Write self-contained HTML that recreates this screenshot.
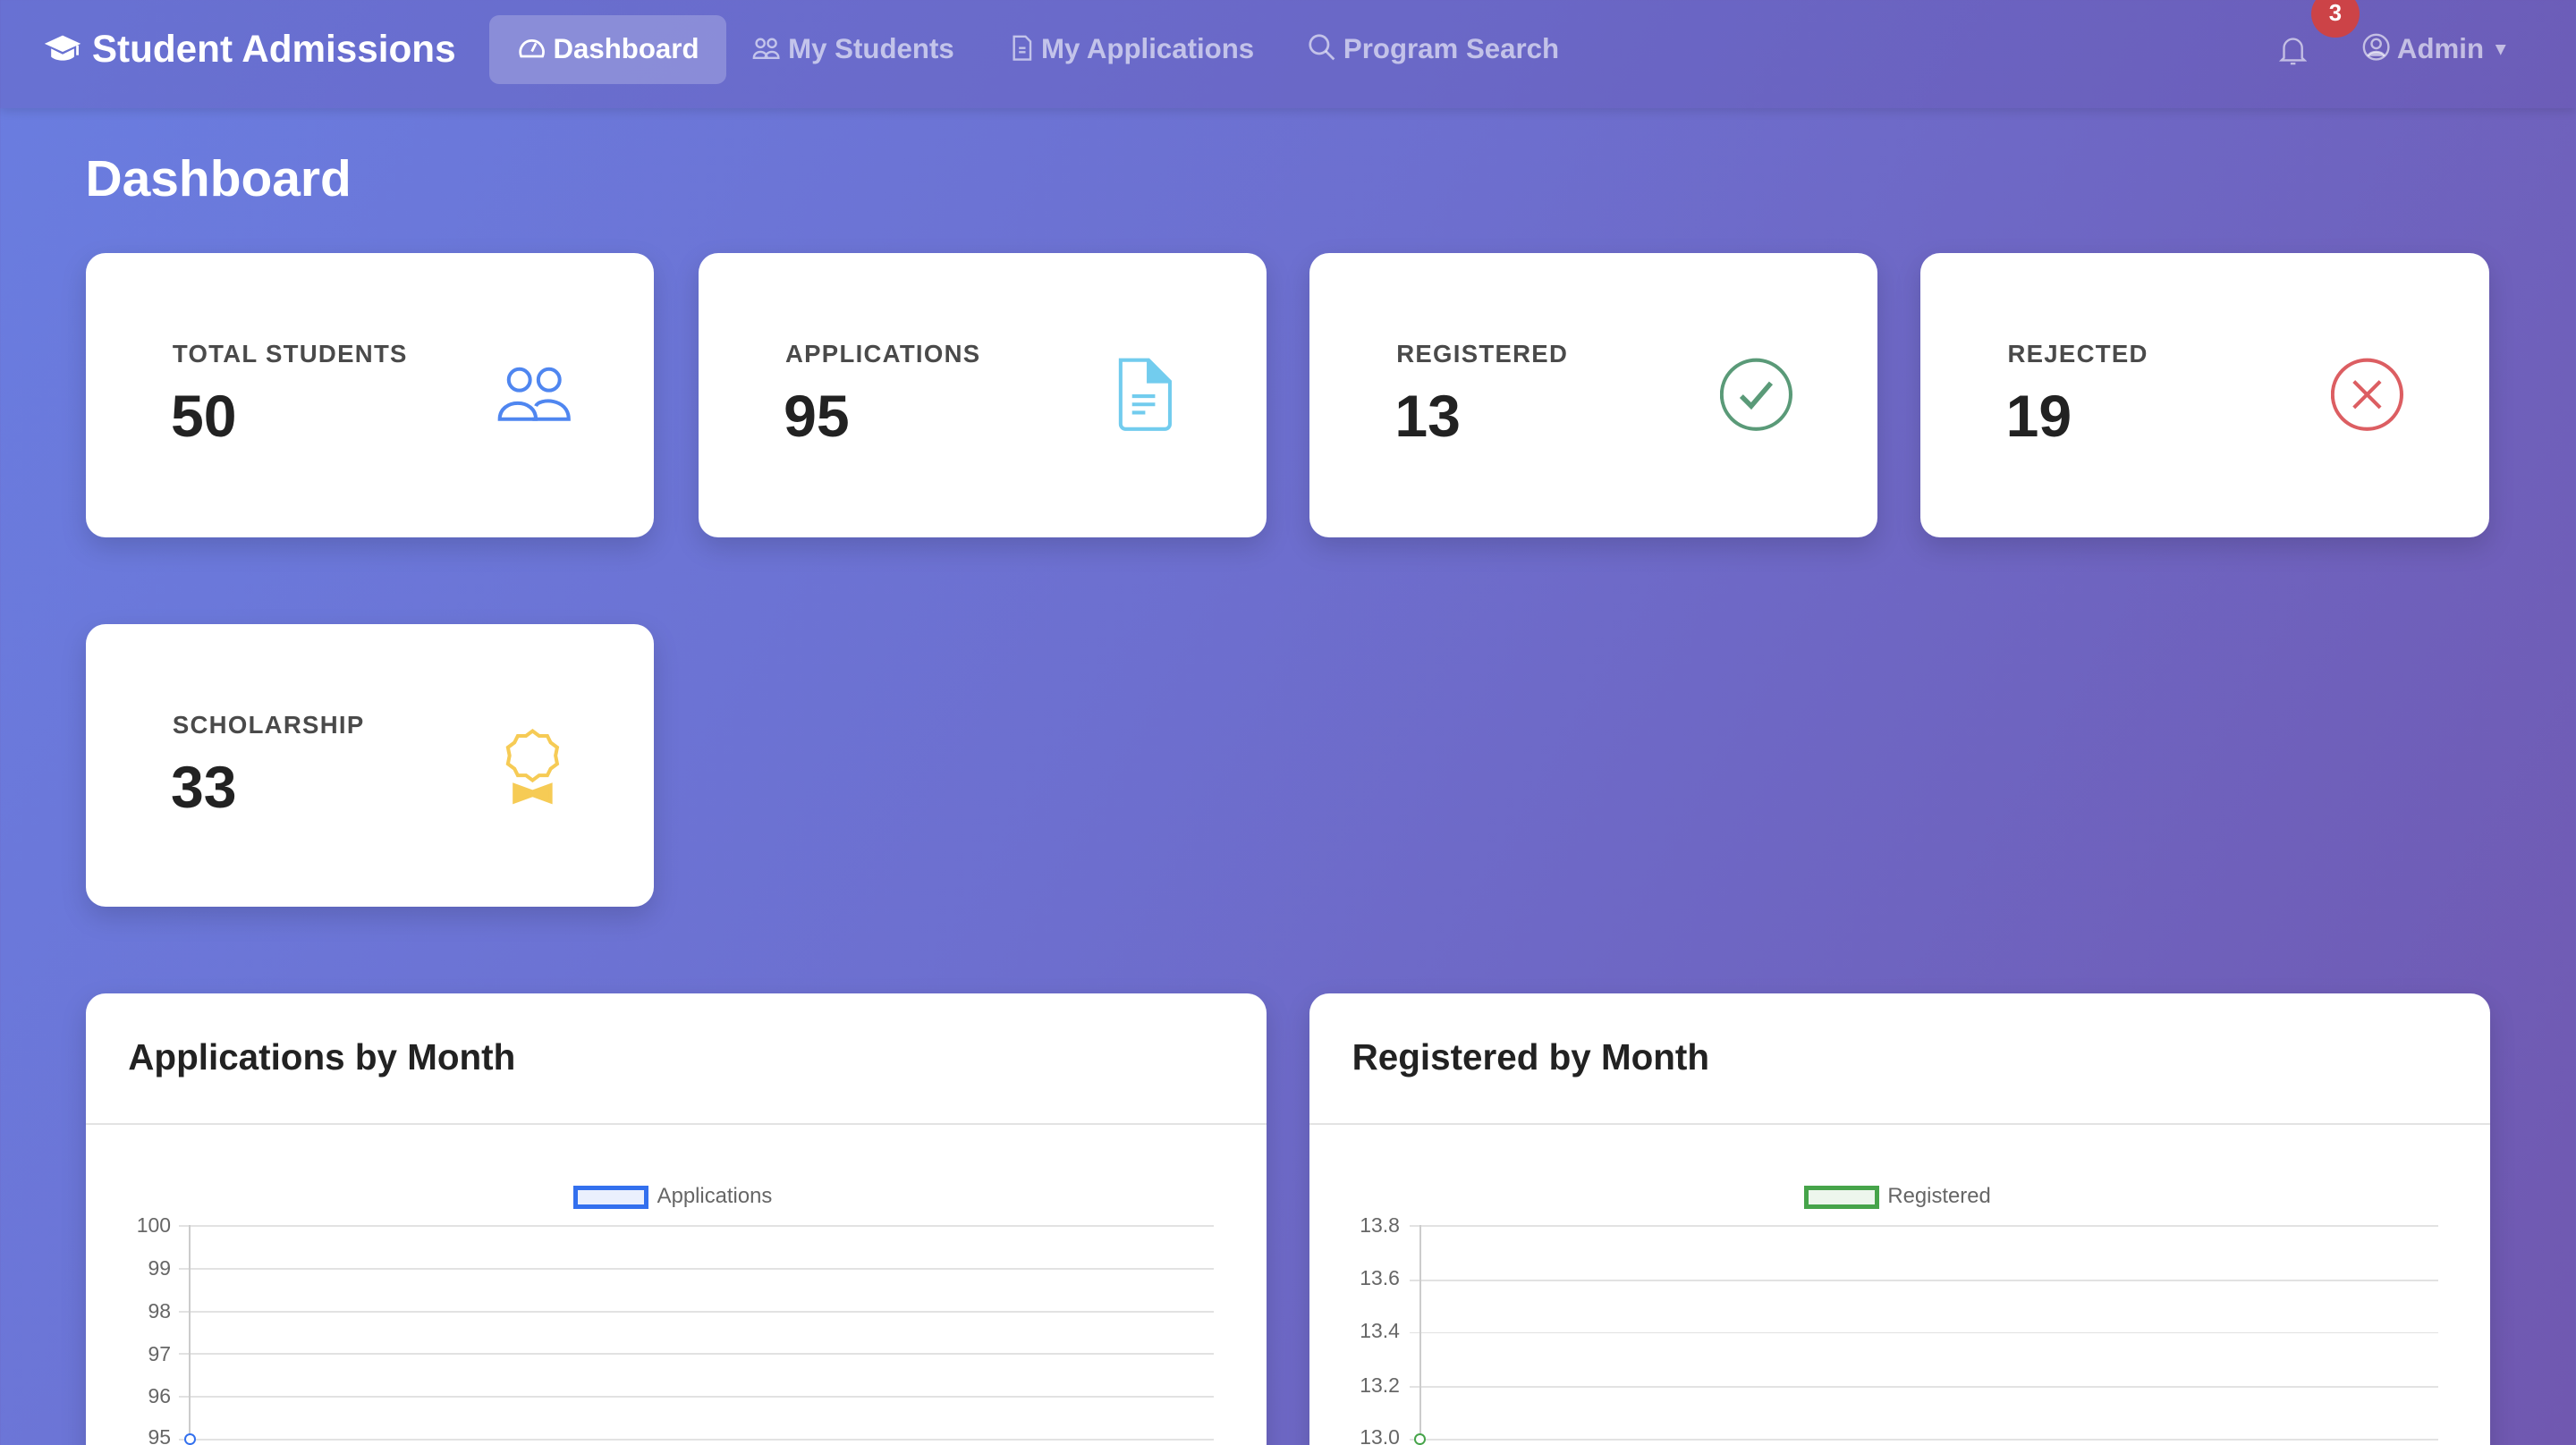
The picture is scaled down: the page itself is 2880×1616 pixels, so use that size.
<!DOCTYPE html>
<html><head><meta charset="utf-8"><style>
html{zoom:1.83673;overflow:hidden;height:880px}
*{box-sizing:border-box;margin:0;padding:0}
body{width:1568px;height:880px;overflow:hidden;font-family:"Liberation Sans",sans-serif;background:linear-gradient(120deg,#6a7de0 0%,#6d6fcf 45%,#7058b0 100%);position:relative}
.nav{position:absolute;left:0;top:0;width:1568px;height:66px;background:rgba(100,80,170,0.25);box-shadow:0 2px 6px rgba(0,0,0,0.12)}
.brand{position:absolute;left:26px;top:17px;color:#fff;font-weight:bold;font-size:23px}
.nl{position:absolute;top:20px;font-size:17px;color:rgba(255,255,255,0.6);font-weight:bold}
.act{position:absolute;left:298px;top:9px;width:144px;height:42px;background:rgba(255,255,255,0.22);border-radius:6px}
h1{position:absolute;left:52px;top:91px;color:#fff;font-size:31px;font-weight:bold}
.card{position:absolute;background:#fff;border-radius:12px;box-shadow:0 6px 16px rgba(0,0,0,0.15)}
.lbl{position:absolute;left:53px;top:53px;font-size:15px;letter-spacing:0.7px;color:#4a4a4a;font-weight:bold}
.num{position:absolute;left:52px;top:79px;font-size:36px;font-weight:bold;color:#222}
.ic{position:absolute;left:250px;top:63px}
.ct{position:absolute;left:26px;top:26px;font-size:22px;font-weight:bold;color:#222}
.hr{position:absolute;left:0;right:0;top:79px;border-top:1.5px solid #e3e3e3}
.yl{position:absolute;font-size:12.5px;color:#666;text-align:right;width:40px}
.g{position:absolute;height:1px;background:#e2e2e2}
</style></head><body>
<div class="nav">
 <div class="act"></div>
 <div class="brand"><svg width="24" height="20" viewBox="0 0 24 20" style="vertical-align:-2px;margin-right:6px"><path d="M12 2 L23 7 L12 12 L1 7Z" fill="#fff"/><path d="M5 10 V15 C8 18 16 18 19 15 V10 L12 13.5Z" fill="#fff"/><path d="M21 8 V14" stroke="#fff" stroke-width="1.5"/></svg>Student Admissions</div>
 <div class="nl" style="left:315px;color:#fff"><svg width="17" height="14" viewBox="0 0 17 14" style="vertical-align:-1px"><path d="M2 12 A7 7 0 1 1 15 12Z" fill="none" stroke="#fff" stroke-width="1.5"/><path d="M8.5 9 L11 4" stroke="#fff" stroke-width="1.5"/></svg> Dashboard</div>
 <div class="nl" style="left:458px"><svg width="17" height="14" viewBox="0 0 17 14" style="vertical-align:-1px" fill="none" stroke="rgba(255,255,255,0.6)" stroke-width="1.3"><circle cx="5" cy="4" r="2.5"/><circle cx="12" cy="4" r="2.5"/><path d="M1 13 C1 8 9 8 9 13Z M8 13 C8 8 16 8 16 13Z"/></svg> My Students</div>
 <div class="nl" style="left:615px"><svg width="14" height="16" viewBox="0 0 14 16" style="vertical-align:-2px" fill="none" stroke="rgba(255,255,255,0.6)" stroke-width="1.3"><path d="M2 1 H9 L12 4 V15 H2Z M5 8 H9 M5 10.5 H9"/></svg> My Applications</div>
 <div class="nl" style="left:796px"><svg width="17" height="17" viewBox="0 0 17 17" style="vertical-align:-2px" fill="none" stroke="rgba(255,255,255,0.6)" stroke-width="1.5"><circle cx="7" cy="7" r="5.5"/><path d="M11 11 L16 16"/></svg> Program Search</div>
 <svg style="position:absolute;left:1387px;top:21px" width="17" height="19" viewBox="0 0 17 19" fill="none" stroke="rgba(255,255,255,0.6)" stroke-width="1.3"><path d="M3 14 V8 A5.5 5.5 0 0 1 14 8 V14 L15.5 15.5 H1.5Z"/><path d="M7 17.5 H10"/></svg>
 <div style="position:absolute;left:1407px;top:-6px;width:29px;height:29px;border-radius:50%;background:#cc4347;color:#fff;font-weight:bold;font-size:14px;text-align:center;line-height:29px">3</div>
 <div class="nl" style="left:1438px"><svg width="17" height="17" viewBox="0 0 17 17" style="vertical-align:-2px" fill="none" stroke="rgba(255,255,255,0.6)" stroke-width="1.3"><circle cx="8.5" cy="8.5" r="7.5"/><circle cx="8.5" cy="6.5" r="2.8"/><path d="M3.5 14 C5 10.5 12 10.5 13.5 14" fill="rgba(255,255,255,0.6)"/></svg> Admin <span style="font-size:11px;vertical-align:2px">▼</span></div>
</div>
<h1>Dashboard</h1>

<div class="card" style="left:52px;top:154px;width:346px;height:173px"><div class="lbl">TOTAL STUDENTS</div><div class="num">50</div>
<svg class="ic" width="46" height="46" viewBox="0 0 46 46" fill="none" stroke="#4f86f0" stroke-width="2.2"><circle cx="14" cy="14" r="6.5"/><circle cx="32" cy="14" r="6.5"/><path d="M2 38 C2 25 24 25 24 38Z"/><path d="M22 38 H44 C44 25 26 25 24 30"/></svg></div>
<div class="card" style="left:425px;top:154px;width:346px;height:173px"><div class="lbl">APPLICATIONS</div><div class="num">95</div>
<svg class="ic" width="46" height="46" viewBox="0 0 46 46" fill="none" stroke="#72ccee" stroke-width="2.2"><path d="M7 2 H24 L37 15 V41 A3 3 0 0 1 34 44 H10 A3 3 0 0 1 7 41Z"/><path d="M24 2 V15 H37" fill="#72ccee"/><path d="M14 24 H28 M14 29 H28 M14 34 H22"/></svg></div>
<div class="card" style="left:797px;top:154px;width:346px;height:173px"><div class="lbl">REGISTERED</div><div class="num">13</div>
<svg class="ic" width="46" height="46" viewBox="0 0 46 46" fill="none" stroke="#5a9a78" stroke-width="2.2"><circle cx="22" cy="23" r="21"/><path d="M13 24 L19 30 L31 16" stroke-width="3"/></svg></div>
<div class="card" style="left:1169px;top:154px;width:346px;height:173px"><div class="lbl">REJECTED</div><div class="num">19</div>
<svg class="ic" width="46" height="46" viewBox="0 0 46 46" fill="none" stroke="#dc5e62" stroke-width="2.2"><circle cx="22" cy="23" r="21"/><path d="M14 15 L30 31 M30 15 L14 31"/></svg></div>
<div class="card" style="left:52px;top:380px;width:346px;height:172px"><div class="lbl">SCHOLARSHIP</div><div class="num">33</div>
<svg class="ic" style="top:62px" width="46" height="48" viewBox="0 0 46 48" fill="none" stroke="#f6cb55" stroke-width="2.2"><path d="M22 3 L26 6 L31 6 L33 10 L37 13 L36 18 L37 23 L33 26 L31 30 L26 30 L22 33 L18 30 L13 30 L11 26 L7 23 L8 18 L7 13 L11 10 L13 6 L18 6Z"/><path d="M11 36 V46 L22 42 L33 46 V36 L22 40Z" fill="#f6cb55"/></svg></div>

<div class="card" style="left:52px;top:605px;width:719px;height:290px">
 <div class="ct">Applications by Month</div><div class="hr"></div>
 <div style="position:absolute;left:297px;top:117px;width:46px;height:14px;border:3px solid #3370ee;background:#eaf0fd"></div>
 <div style="position:absolute;left:348px;top:116px;font-size:13px;color:#666">Applications</div>
 <div class="yl" style="left:12px;top:134px">100</div><div class="yl" style="left:12px;top:160px">99</div><div class="yl" style="left:12px;top:186px">98</div><div class="yl" style="left:12px;top:212px">97</div><div class="yl" style="left:12px;top:238px">96</div><div class="yl" style="left:12px;top:263px">95</div>
 <div class="g" style="left:57px;width:630px;top:141px"></div><div class="g" style="left:57px;width:630px;top:167px"></div><div class="g" style="left:57px;width:630px;top:193px"></div><div class="g" style="left:57px;width:630px;top:219px"></div><div class="g" style="left:57px;width:630px;top:245px"></div><div class="g" style="left:57px;width:630px;top:271px"></div>
 <div style="position:absolute;left:63px;top:141px;width:1px;height:140px;background:#ccc"></div>
 <div style="position:absolute;left:60px;top:268px;width:7px;height:7px;border:1.3px solid #3370ee;border-radius:50%;background:#fff"></div>
</div>
<div class="card" style="left:797px;top:605px;width:719px;height:290px">
 <div class="ct">Registered by Month</div><div class="hr"></div>
 <div style="position:absolute;left:301px;top:117px;width:46px;height:14px;border:3px solid #46a44a;background:#edf6ed"></div>
 <div style="position:absolute;left:352px;top:116px;font-size:13px;color:#666">Registered</div>
 <div class="yl" style="left:15px;top:134px">13.8</div><div class="yl" style="left:15px;top:166px">13.6</div><div class="yl" style="left:15px;top:198px">13.4</div><div class="yl" style="left:15px;top:231px">13.2</div><div class="yl" style="left:15px;top:263px">13.0</div>
 <div class="g" style="left:61px;width:626px;top:141px"></div><div class="g" style="left:61px;width:626px;top:174px"></div><div class="g" style="left:61px;width:626px;top:206px"></div><div class="g" style="left:61px;width:626px;top:239px"></div><div class="g" style="left:61px;width:626px;top:271px"></div>
 <div style="position:absolute;left:67px;top:141px;width:1px;height:140px;background:#ccc"></div>
 <div style="position:absolute;left:64px;top:268px;width:7px;height:7px;border:1.3px solid #46a44a;border-radius:50%;background:#fff"></div>
</div>
</body></html>
